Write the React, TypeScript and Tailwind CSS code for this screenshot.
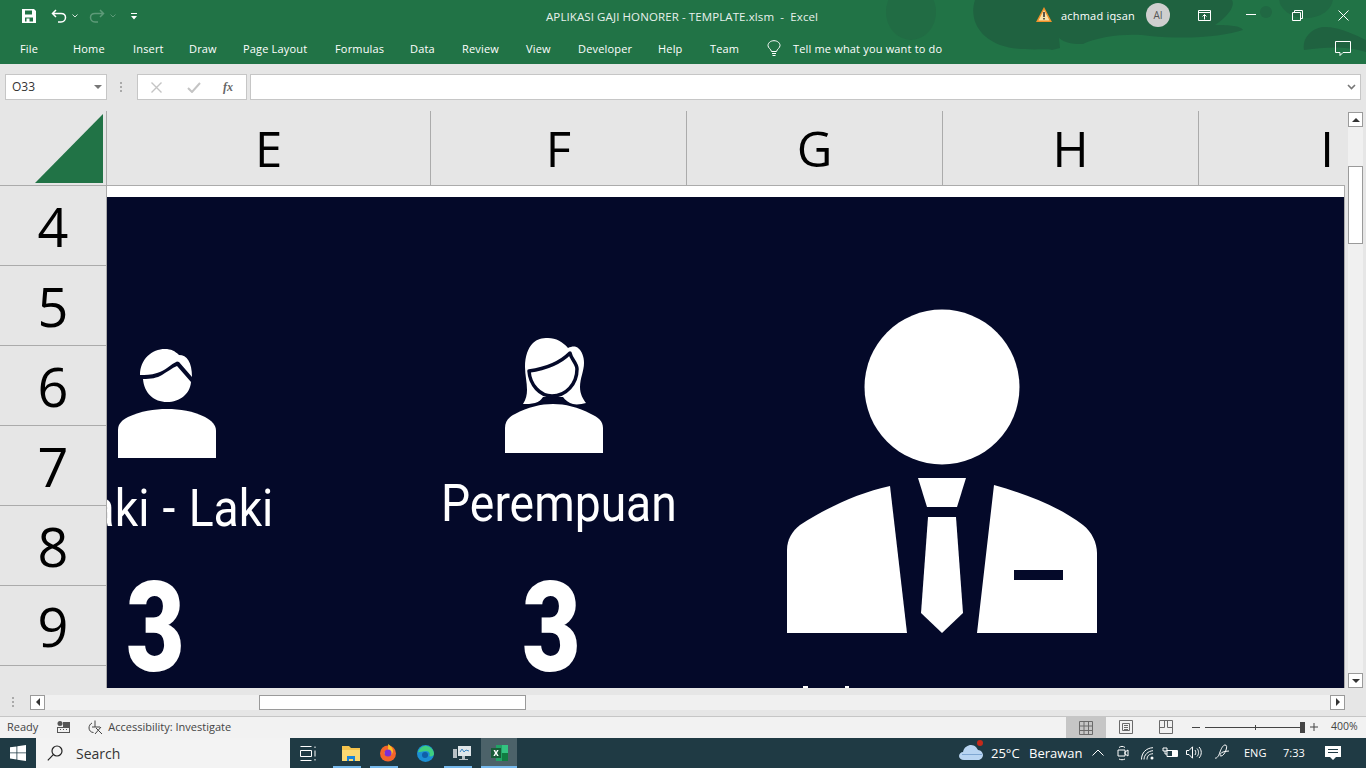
import React from "react";

const ui = { fontFamily: '"Open Sans", "Noto Sans", sans-serif' };
const navy = "#040929";

function Male() {
  return (
    <svg width="100" height="110" viewBox="0 0 100 110" className="absolute left-[117px] top-[349px]">
      <path fill="#fff" d="M1 109V81C1 75 5 71 11 68C24 62 37 60 50 60C63 60 76 62 88 68C95 72 99 76 99 82V109Z" />
      <path fill="#fff" d="M23 26C23 10 35 0 48 0C54 0 58 2 62 6C70 6 75 13 75 28L62 13L60 12.500C54 15 48 22 40 24C34 26 28 26 23 26Z" />
      <path fill="#fff" d="M26 30C34 30 40 29 45 26C50 23 55 19 60 17L74 33C73 45 63 53 50 53C37 53 27 44 26 30Z" />
    </svg>
  );
}

function Female() {
  return (
    <svg width="100" height="116" viewBox="0 0 100 116" className="absolute left-[504px] top-[338px]">
      <path fill="#fff" d="M1 115V90C1 83 5 79 11 76C24 69 37 66 49 66C61 66 74 69 87 76C94 79 99 83 99 90V115Z" />
      <path fill="#fff" d="M21 29C21 18 24 10 29 5C33 1 38 0 44 0C52 0 59 4 64 10C68 8 72 8 74 10C78 13 80 19 80 25C80 33 76 40 76 49C76 56 79 61 82 65C78 66 73 67 69 66C65 65 61 62 59 59H39C37 62 35 64 31 65C27 66 23 66 19 66C22 61 23 57 23 52C23 44 21 37 21 29Z" />
      <path fill="#fff" stroke={navy} strokeWidth="3.500" strokeLinejoin="round" d="M25 33C40 31 56 25 66 15C67 21 73 25 73 31C73 46 62 58 48 58C36 58 26 47 25 33Z" />
    </svg>
  );
}

function Suit() {
  return (
    <svg width="312" height="326" viewBox="0 0 312 326" className="absolute left-[786px] top-[308px]">
      <circle cx="156" cy="79" r="77.500" fill="#fff" />
      <path fill="#fff" d="M104 178L121 325H1V242C1 232 6 223 14 217C40 200 72 185 104 178Z" />
      <path fill="#fff" fillRule="evenodd" d="M208 177L191 325H311V245C311 235 306 224 297 217C272 198 240 186 208 177ZM228 262H277V272H228Z" />
      <path fill="#fff" d="M132 170H180L171 199H141Z" />
      <path fill="#fff" d="M142 209H170L177 305L156 325L135 305Z" />
    </svg>
  );
}

const columns: [string, number][] = [
  ["E", 324],
  ["F", 256],
  ["G", 256],
  ["H", 256],
];

const ribbon: [string, number][] = [
  ["File", 20],
  ["Home", 73],
  ["Insert", 133],
  ["Draw", 189],
  ["Page Layout", 243],
  ["Formulas", 335],
  ["Data", 410],
  ["Review", 462],
  ["View", 526],
  ["Developer", 578],
  ["Help", 658],
  ["Team", 710],
];

export default function App() {
  return (
    <div className="relative flex h-[768px] w-[1366px] flex-col overflow-hidden bg-[#e6e6e6]" style={ui}>
      {/* Title + tabs */}
      <div className="relative h-[64px] shrink-0 bg-[#217346] text-white">
        <svg className="absolute inset-0" width="1366" height="64" viewBox="0 0 1366 64">
          <path fill="#1f6240" d="M975 0C970 15 975 35 1000 45C1020 52 1045 48 1052 50L1060 48L1059 38C1066 44 1075 44 1083 44C1100 36 1130 33 1150 36C1190 40 1225 36 1243 30C1240 25 1225 25 1215 25C1230 15 1235 5 1232 0Z" />
          <ellipse cx="911" cy="12" rx="25" ry="28" fill="#216c44" />
          <ellipse cx="1306" cy="-2" rx="27" ry="20" fill="#206843" />
          <circle cx="1266" cy="12" r="6" fill="#206843" />
          <path fill="#1f6240" d="M1304 50C1302 35 1315 27 1325 27C1335 27 1345 30 1366 40V52C1340 45 1325 48 1304 50Z" />
        </svg>
        <div className="relative flex h-[32px] items-center">
          <svg width="14" height="14" viewBox="0 0 14 14" className="ml-[22px]">
            <path fill="#fff" fillRule="evenodd" d="M0 0h12l2 2v12H0zM3 1.500v4h7v-4zM3 8.500v4h1.500v-3h3v3H11v-4z" />
          </svg>
          <svg width="16" height="14" viewBox="0 0 16 14" fill="none" stroke="#fff" strokeWidth="1.500" className="ml-[15px]">
            <path d="M5 1L1.500 4.500L5 8M2 4.500H10C13 4.500 14.500 6.500 14.500 8.500C14.500 10.500 13 13 10 13H7" />
          </svg>
          <svg width="6" height="4" viewBox="0 0 6 4" className="ml-[5px]" fill="none" stroke="#d7e6dd">
            <path d="M.5.500L3 3L5.500.500" />
          </svg>
          <svg width="16" height="14" viewBox="0 0 16 14" fill="none" stroke="#5d9a78" strokeWidth="1.500" className="ml-[11px]">
            <path d="M11 1L14.500 4.500L11 8M14 4.500H6C3 4.500 1.500 6.500 1.500 8.500C1.500 10.500 3 13 6 13H9" />
          </svg>
          <svg width="6" height="4" viewBox="0 0 6 4" className="ml-[5px]" fill="none" stroke="#5d9a78">
            <path d="M.5.500L3 3L5.500.500" />
          </svg>
          <svg width="6" height="7" viewBox="0 0 6 7" className="ml-[15px]" fill="#fff">
            <path d="M0 0h6v1H0zM0 3h6L3 6.500z" />
          </svg>
          <div className="absolute left-[546px] top-[9px] text-[11.500px] leading-[16px] tracking-[0.1px] whitespace-pre text-[#e8f1ec]">APLIKASI GAJI HONORER - TEMPLATE.xlsm  -  Excel</div>
          <svg width="16" height="15" viewBox="0 0 16 15" className="absolute left-[1036px] top-[7px]">
            <path d="M8 0L16 15H0Z" fill="#f0912a" />
            <path d="M8 3L13.500 13.500H2.500Z" fill="#fbe3a8" />
            <path d="M7.200 5h1.600v5H7.200zM7.200 11h1.600v1.500H7.200z" fill="#333" />
          </svg>
          <div className="absolute left-[1061px] top-[7px] text-[11px] leading-[17px] tracking-[0.2px]">achmad iqsan</div>
          <div className="absolute left-[1146px] top-[3px] flex h-[24px] w-[24px] items-center justify-center rounded-full bg-[#cfcfcf] text-[10px] text-[#555]">AI</div>
          <svg width="13" height="11" viewBox="0 0 13 11" fill="none" stroke="#fff" className="absolute left-[1198px] top-[10px]">
            <path d="M.5.500h12v10H.5zM.5 2.500h12M6.500 9.500V4.500M4.500 6.500L6.500 4.500L8.500 6.500" />
          </svg>
          <div className="absolute left-[1246px] top-[14px] h-px w-[10px] bg-white" />
          <svg width="11" height="11" viewBox="0 0 11 11" fill="none" stroke="#fff" className="absolute left-[1292px] top-[10px]">
            <path d="M.5 2.500h8v8h-8zM2.500 2.500V.5h8v8H8.500" />
          </svg>
          <svg width="11" height="11" viewBox="0 0 11 11" fill="none" stroke="#fff" className="absolute left-[1338px] top-[10px]">
            <path d="M.5.500l10 10M10.500.500l-10 10" />
          </svg>
        </div>
        <div className="relative h-[32px] text-[11px] leading-[34px] tracking-[0.17px]">
          {ribbon.map(([t, x]) => (
            <span key={t} className="absolute top-0 whitespace-nowrap" style={{ left: x }}>{t}</span>
          ))}
          <svg width="14" height="17" viewBox="0 0 14 17" fill="none" stroke="#fff" className="absolute left-[767px] top-[8px]">
            <path d="M4.500 11.500C4 9 1 8 1 5.500C1 3 3.500 .7 7 .7C10.500 .7 13 3 13 5.500C13 8 10 9 9.500 11.500ZM5 13.500h4M5.500 15.500h3" />
          </svg>
          <span className="absolute left-[793px] top-0 whitespace-nowrap">Tell me what you want to do</span>
          <svg width="17" height="15" viewBox="0 0 17 15" fill="none" stroke="#fff" className="absolute left-[1335px] top-[9px]">
            <path d="M.5.500h15v11H8l-3 3v-3H.5z" />
          </svg>
        </div>
      </div>

      {/* Formula bar */}
      <div className="relative flex h-[47px] shrink-0 bg-[#e6e6e6] pt-[10px]">
        <div className="ml-[5px] flex h-[26px] w-[102px] items-center justify-between border border-[#c6c6c6] bg-white pl-[6px] pr-[4px] text-[12px] text-[#333]">
          <span>O33</span>
          <svg width="8" height="4" viewBox="0 0 8 4"><path d="M0 0h8L4 4z" fill="#777" /></svg>
        </div>
        <div className="ml-[13px] mt-[8px] flex h-[10px] w-[3px] flex-col justify-between">
          <div className="h-[2px] w-[2px] bg-[#aaa]" />
          <div className="h-[2px] w-[2px] bg-[#aaa]" />
          <div className="h-[2px] w-[2px] bg-[#aaa]" />
        </div>
        <div className="ml-[14px] flex h-[26px] w-[110px] items-center border border-[#c6c6c6] bg-white">
          <svg width="11" height="11" viewBox="0 0 11 11" fill="none" stroke="#c4c4c4" strokeWidth="1.400" className="ml-[13px]"><path d="M.5.500l10 10M10.500.500l-10 10" /></svg>
          <svg width="14" height="11" viewBox="0 0 14 11" fill="none" stroke="#c4c4c4" strokeWidth="2" className="ml-[25px]"><path d="M1 6l4 4L13 1" /></svg>
          <span className="ml-[22px] text-[12px] font-bold italic text-[#666]" style={{ fontFamily: '"Liberation Serif", serif' }}>fx</span>
        </div>
        <div className="ml-[3px] flex h-[26px] w-[1111px] items-center justify-end border border-[#c6c6c6] bg-white pr-[4px]">
          <svg width="9" height="6" viewBox="0 0 9 6" fill="none" stroke="#777" strokeWidth="1.600"><path d="M1 1l3.500 3.500L8 1" /></svg>
        </div>
      </div>

      {/* Sheet area */}
      <div className="relative flex h-[577px] shrink-0">
        <div className="flex w-[1345px] flex-col">
          {/* Column headers */}
          <div className="flex h-[75px] shrink-0 border-b border-[#ababab]">
            <div className="relative h-full w-[107px] shrink-0 border-r border-[#ababab]">
              <svg width="68" height="69" viewBox="0 0 68 69" className="absolute left-[35px] top-[3px]"><path d="M68 0V69H0Z" fill="#217346" /></svg>
            </div>
            {columns.map(([c, w]) => (
              <div key={c} className="flex shrink-0 items-center justify-center border-r border-[#ababab] pt-[2px] text-[49px] font-medium text-black" style={{ width: w }}>
                {c}
              </div>
            ))}
            <div className="flex-1 overflow-hidden">
              <div className="flex h-full w-[256px] items-center justify-center pt-[2px] text-[49px] font-medium text-black">I</div>
            </div>
          </div>
          <div className="flex flex-1 overflow-hidden">
            {/* Row headers */}
            <div className="w-[107px] shrink-0 border-r border-[#ababab]">
              {[4, 5, 6, 7, 8, 9, 0].map((n) => (
                <div key={n} className="flex h-[80px] items-center justify-center border-b border-[#ababab] pt-[2px] text-[54px] font-medium text-black">{n > 0 ? n : ""}</div>
              ))}
            </div>
            {/* Cells */}
            <div className="flex flex-1 flex-col border-r border-[#ababab] bg-white">
              <div className="h-[11px] shrink-0" />
              <div className="flex-1" style={{ backgroundColor: navy }} />
            </div>
          </div>
        </div>
        {/* Vertical scrollbar */}
        <div className="flex w-[21px] flex-col items-center bg-[#e6e6e6] pt-[1px]">
          <div className="flex h-[15px] w-[15px] items-center justify-center border border-[#9a9a9a] bg-white">
            <svg width="8" height="4" viewBox="0 0 8 4"><path d="M4 0l4 4H0z" fill="#333" /></svg>
          </div>
          <div className="w-[15px] flex-1 bg-[#f0f0f0]">
            <div className="mt-[39px] h-[78px] w-[15px] border border-[#9a9a9a] bg-white" />
          </div>
          <div className="flex h-[15px] w-[15px] items-center justify-center border border-[#9a9a9a] bg-white">
            <svg width="8" height="4" viewBox="0 0 8 4"><path d="M4 4l4-4H0z" fill="#333" /></svg>
          </div>
        </div>
      </div>

      {/* Horizontal scrollbar row */}
      <div className="flex h-[29px] shrink-0 items-center border-b border-[#c6c6c6] bg-[#e6e6e6]">
        <div className="ml-[12px] flex h-[10px] w-[3px] flex-col justify-between">
          <div className="h-[2px] w-[2px] bg-[#aaa]" />
          <div className="h-[2px] w-[2px] bg-[#aaa]" />
          <div className="h-[2px] w-[2px] bg-[#aaa]" />
        </div>
        <div className="ml-[15px] flex h-[15px] w-[1315px] bg-[#f0f0f0]">
          <div className="flex h-[15px] w-[15px] items-center justify-center border border-[#9a9a9a] bg-white">
            <svg width="4" height="8" viewBox="0 0 4 8"><path d="M0 4l4-4v8z" fill="#333" /></svg>
          </div>
          <div className="ml-[214px] h-[15px] w-[267px] border border-[#9a9a9a] bg-white" />
          <div className="ml-auto flex h-[15px] w-[15px] items-center justify-center border border-[#9a9a9a] bg-white">
            <svg width="4" height="8" viewBox="0 0 4 8"><path d="M4 4L0 0v8z" fill="#333" /></svg>
          </div>
        </div>
      </div>

      {/* Status bar */}
      <div className="relative flex h-[21px] shrink-0 items-center bg-[#f2f2f2] text-[11px] text-[#444]">
        <span className="ml-[7px]">Ready</span>
        <svg width="13" height="13" viewBox="0 0 13 13" className="ml-[19px]" fill="#555">
          <circle cx="3" cy="2.500" r="2.500" />
          <path d="M6 1h7v11H0V6h13v1H1v4h11V7H6z" />
          <path d="M3 8h1v1H3zM6 8h1v1H6zM9 8h1v1H9z" />
        </svg>
        <svg width="16" height="16" viewBox="0 0 16 16" fill="none" stroke="#444" className="ml-[18px]">
          <path d="M4 3C2 4 1 6 1 8C1 10.500 3 12.500 5.500 12.500M7 .5V7M4 7H12M8 8l6 6M13 7l-6 7" />
        </svg>
        <span className="ml-[4px]">Accessibility: Investigate</span>
        <div className="absolute left-[1066px] top-0 flex h-[21px] w-[40px] items-center justify-center bg-[#c6c6c6]">
          <svg width="14" height="14" viewBox="0 0 14 14" fill="none" stroke="#6a6a6a">
            <path d="M.5.500h13v13H.5zM5 .5v13M9.500 .5v13M.5 5h13M.5 9.500h13" />
          </svg>
        </div>
        <svg width="14" height="14" viewBox="0 0 14 14" fill="none" stroke="#6a6a6a" className="absolute left-[1119px] top-[3px]">
          <path d="M.5.500h13v13H.5zM3.500 3.500h7v7h-7zM5 5.500h4M5 7.500h4M5 9.500h4" />
        </svg>
        <svg width="14" height="14" viewBox="0 0 14 14" fill="none" stroke="#6a6a6a" className="absolute left-[1159px] top-[3px]">
          <path d="M.5.500h13v13H.5zM.5 7.500h5V.5M8.500.5v7h5" />
        </svg>
        <div className="absolute left-[1192px] top-[10px] h-px w-[8px] bg-[#444]" />
        <div className="absolute left-[1205px] top-[10px] h-px w-[98px] bg-[#444]" />
        <div className="absolute left-[1255px] top-[8px] h-[5px] w-px bg-[#444]" />
        <div className="absolute left-[1300px] top-[5px] h-[11px] w-[5px] bg-[#444]" />
        <svg width="8" height="8" viewBox="0 0 8 8" className="absolute left-[1310px] top-[6px]" stroke="#444" fill="none"><path d="M0 4h8M4 0v8" /></svg>
        <span className="absolute left-[1331px] top-[2px] text-[10.500px]">400%</span>
      </div>

      {/* Taskbar */}
      <div className="relative flex h-[30px] shrink-0 items-center bg-[#1f3a44] text-white">
        <svg width="16" height="16" viewBox="0 0 16 16" className="ml-[10px]" fill="#fff">
          <path d="M0 2.300L6.500 1.400V7.500H0zM7.300 1.300L16 0V7.500H7.300zM0 8.300H6.500V14.500L0 13.600zM7.300 8.300H16V16L7.300 14.700z" />
        </svg>
        <div className="ml-[10px] flex h-[30px] w-[254px] items-center bg-[#f3f3f3] text-[14px] text-[#333]">
          <svg width="16" height="16" viewBox="0 0 16 16" fill="none" stroke="#222" strokeWidth="1.200" className="ml-[11px]">
            <circle cx="10" cy="6" r="5" />
            <path d="M6.300 9.700L.8 15.300" />
          </svg>
          <span className="ml-[13px]">Search</span>
        </div>
        <svg width="16" height="15" viewBox="0 0 16 15" fill="none" stroke="#fff" className="ml-[10px]">
          <path d="M.5.500h11M.5 14.500h11M.5 4.500h11v6H.5zM15 .5v1.500M15 4.500v6M15 13v1.500" />
        </svg>
        <div className="absolute left-[332px] top-0 flex h-[30px] w-[38px] items-center justify-center">
          <svg width="18" height="15" viewBox="0 0 18 15">
            <path d="M0 0h7l2 2h9v13H0z" fill="#f5c34d" />
            <path d="M0 4h18v11H0z" fill="#fbd872" />
            <path d="M5 10h8v5h-2v-2H7v2H5z" fill="#1b84d8" />
          </svg>
          <div className="absolute bottom-0 left-[1px] h-[2px] w-[28px] bg-[#76b9ed]" />
        </div>
        <div className="absolute left-[369px] top-0 flex h-[30px] w-[38px] items-center justify-center">
          <svg width="18" height="18" viewBox="0 0 18 18">
            <circle cx="9" cy="9.500" r="8" fill="#f5642a" />
            <path d="M9 0c3 2 5 4 5 7 0 3-3 5-5 5S5 10 5 8c2 1 5 0 4-8z" fill="#fcc024" />
            <circle cx="9" cy="9" r="3.500" fill="#7b2ed6" />
          </svg>
          <div className="absolute bottom-0 left-[1px] h-[2px] w-[28px] bg-[#76b9ed]" />
        </div>
        <div className="absolute left-[406px] top-0 flex h-[30px] w-[38px] items-center justify-center">
          <svg width="17" height="17" viewBox="0 0 17 17">
            <circle cx="8.500" cy="8.500" r="8.500" fill="#1b8fd4" />
            <path d="M1 7C3 2 7 0 10 1c4 1 7 4 7 8 0 2-3 3-5 2 2-2 0-5-3-5C5 6 1 8 1 7z" fill="#3fcf7f" />
            <circle cx="8" cy="10" r="3" fill="#0f5fa8" />
          </svg>
        </div>
        <div className="absolute left-[443px] top-0 flex h-[30px] w-[38px] items-center justify-center">
          <svg width="18" height="16" viewBox="0 0 18 16">
            <path d="M5 1h13v10H5z" fill="#dfe6ea" />
            <path d="M7 7l2-3 2 3 2-2 3 1" fill="none" stroke="#3b87c4" />
            <path d="M0 4h4v9H0zM9 11h3v3H9zM6 14h9v1H6z" fill="#b7c0c5" />
          </svg>
          <div className="absolute bottom-0 left-[1px] h-[2px] w-[28px] bg-[#76b9ed]" />
        </div>
        <div className="absolute left-[481px] top-0 flex h-[30px] w-[36px] items-center justify-center bg-[#4c6269]">
          <svg width="17" height="16" viewBox="0 0 17 16">
            <path d="M5 0h12v16H5z" fill="#21a366" />
            <path d="M11 0h6v8h-6z" fill="#33c481" />
            <path d="M11 8h6v8h-6z" fill="#107c41" />
            <path d="M0 3h10v10H0z" fill="#185c37" />
            <path d="M2.500 5h1.700L5 7l1-2h1.600L6 8l1.700 3H6L5 9l-1 2H2.400L4 8z" fill="#fff" />
          </svg>
          <div className="absolute bottom-0 left-0 h-[2px] w-full bg-[#76b9ed]" />
        </div>
        <svg width="24" height="17" viewBox="0 0 24 17" className="absolute left-[959px] top-[6px]">
          <path d="M5 16C2 16 0 14 0 12C0 10 2 8 4 8C5 3 9 1 12 1C16 1 18 4 19 6C22 6 24 9 24 11C24 14 21 16 19 16Z" fill="#b9d5f2" />
          <path d="M3 10h20v1H3z" fill="#7fa7d2" />
        </svg>
        <div className="absolute left-[977px] top-[2px] h-[6px] w-[6px] rounded-full bg-[#c52a1a]" />
        <span className="absolute left-[991px] top-[6px] text-[13px] leading-[18px]">25°C</span>
        <span className="absolute left-[1029px] top-[6px] text-[13px] leading-[18px]">Berawan</span>
        <svg width="12" height="7" viewBox="0 0 12 7" fill="none" stroke="#fff" className="absolute left-[1092px] top-[11px]"><path d="M.5 6.500L6 1l5.500 5.500" /></svg>
        <svg width="12" height="16" viewBox="0 0 12 16" fill="none" stroke="#fff" className="absolute left-[1117px] top-[7px]">
          <path d="M1 5h7v6H1zM8 7l3-2v6L8 9zM2 2.500C4 1 6 1 8 2.500M2 14C4 15 6 15 8 14" />
        </svg>
        <svg width="13" height="13" viewBox="0 0 13 13" fill="none" stroke="#fff" className="absolute left-[1141px] top-[9px]">
          <path d="M.5 12.500C.5 6 5 1 12 .7M3 12.500C3 8 7 4 12 3.700M6 12.500C6 9 8 7 12 6.700" />
          <circle cx="11" cy="11" r="1.500" fill="#fff" stroke="none" />
        </svg>
        <svg width="16" height="11" viewBox="0 0 16 11" fill="none" stroke="#fff" className="absolute left-[1162px] top-[9px]">
          <path d="M5 3.500h10.500v6H5zM1 1v3h4V1zM3 4v3h2" />
          <path d="M10 4h5v5h-5z" fill="#fff" stroke="none" />
        </svg>
        <svg width="16" height="13" viewBox="0 0 16 13" fill="none" stroke="#fff" className="absolute left-[1186px] top-[8px]">
          <path d="M.5 4.500h2.500L6.500.8v11.400L3 8.500H.5zM9 4c1 1.500 1 3.500 0 5M11 2.500c2 2 2 6 0 8M13 1c3 3 3 8 0 11" />
        </svg>
        <svg width="16" height="16" viewBox="0 0 16 16" fill="none" stroke="#fff" className="absolute left-[1214px] top-[6px]">
          <path d="M1 14C3 15 5 11 6 8C7 5 9 1 11 1C13 1 13 3 12 6C11 9 9 12 7 12C5 12 6 9 9 8C11 7.500 13 7 15 7" />
        </svg>
        <span className="absolute left-[1244px] top-[7px] text-[11px] leading-[16px]">ENG</span>
        <span className="absolute left-[1283px] top-[7px] text-[11px] leading-[16px]">7:33</span>
        <svg width="16" height="15" viewBox="0 0 16 15" className="absolute left-[1325px] top-[8px]" fill="#fff">
          <path d="M0 0h16v11h-5l-3 3-3-3H0z" />
          <path d="M3 3h10v1H3zM3 6h10v1H3z" fill="#1f3a44" />
        </svg>
      </div>

      {/* Shapes floating on the sheet */}
      <div className="pointer-events-none absolute left-0 top-0 h-[688px] w-[1345px]">
        <div className="absolute bottom-0 left-[107px] right-0 top-[197px] overflow-hidden">
          <div className="absolute left-[11px] top-[277px] origin-left scale-x-[0.889] whitespace-nowrap text-[52px] leading-[70px] text-white [word-spacing:2px]" style={{ fontFamily: "Roboto, sans-serif" }}>
            <span className="ml-[-60px]">Laki - Laki</span>
          </div>
        </div>
        <div className="absolute left-[441px] top-[469px] origin-left scale-x-[0.889] whitespace-nowrap text-[52px] leading-[70px] text-white" style={{ fontFamily: "Roboto, sans-serif" }}>Perempuan</div>
        <div className="absolute left-[126px] top-[568px] origin-left scale-x-[0.8] text-[127px] font-black leading-[120px] text-white" style={{ fontFamily: "Roboto, sans-serif" }}>3</div>
        <div className="absolute left-[522px] top-[568px] origin-left scale-x-[0.8] text-[127px] font-black leading-[120px] text-white" style={{ fontFamily: "Roboto, sans-serif" }}>3</div>
        <Male />
        <Female />
        <Suit />
        <div className="absolute left-[803px] top-[686px] h-[2px] w-[5px] bg-white" />
        <div className="absolute left-[845px] top-[686px] h-[2px] w-[4px] bg-white" />
      </div>
    </div>
  );
}
